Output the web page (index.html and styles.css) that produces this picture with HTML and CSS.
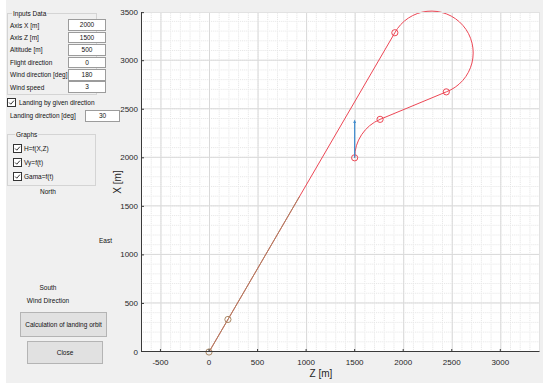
FILE: index.html
```html
<!DOCTYPE html>
<html>
	<head>
		<meta charset="utf-8" />
		<title>Landing orbit</title>
<link rel="stylesheet" href="styles.css">
	</head>
	<body>
		<div class="figure">
			<div class="panel">
				<fieldset class="group inputs">
					<legend>Inputs Data</legend>
					<div class="row"><span class="label">Axis X [m]</span><span class="field">2000</span></div>
					<div class="row"><span class="label">Axis Z [m]</span><span class="field">1500</span></div>
					<div class="row"><span class="label">Altitude [m]</span><span class="field">500</span></div>
					<div class="row"><span class="label">Flight direction</span><span class="field">0</span></div>
					<div class="row"><span class="label">Wind direction [deg]</span><span class="field">180</span></div>
					<div class="row"><span class="label">Wind speed</span><span class="field">3</span></div>
				</fieldset>

				<div class="check given">
					<span class="box"><svg viewBox="0 0 9 9"><path d="M1.5 4.6 L3.6 6.7 L7.6 2.1" /></svg></span>
					<span>Landing by given direction</span>
				</div>
				<div class="row landing">
					<span class="label">Landing direction [deg]</span><span class="field">30</span>
				</div>

				<fieldset class="group graphs">
					<legend>Graphs</legend>
					<div class="check">
						<span class="box"><svg viewBox="0 0 9 9"><path d="M1.5 4.6 L3.6 6.7 L7.6 2.1" /></svg></span>
						<span>H=f(X,Z)</span>
					</div>
					<div class="check">
						<span class="box"><svg viewBox="0 0 9 9"><path d="M1.5 4.6 L3.6 6.7 L7.6 2.1" /></svg></span>
						<span>Vy=f(t)</span>
					</div>
					<div class="check">
						<span class="box"><svg viewBox="0 0 9 9"><path d="M1.5 4.6 L3.6 6.7 L7.6 2.1" /></svg></span>
						<span>Gama=f(t)</span>
					</div>
				</fieldset>

				<div class="compass north">North</div>
				<div class="compass east">East</div>
				<div class="compass south">South</div>
				<div class="compass wind">Wind Direction</div>

				<button class="btn calc">Calculation of landing orbit</button>
				<button class="btn close">Close</button>
			</div>

			<svg class="plot" width="433" height="383" viewBox="0 0 433 383">
				<defs>
					<pattern id="minor" width="100" height="100" patternUnits="userSpaceOnUse">
						<path d="M0 0V100M0 0H100" stroke="#e4e4e4" stroke-width="20.6" stroke-dasharray="10.3 10.3" fill="none" />
					</pattern>
					<pattern id="major" width="500" height="500" patternUnits="userSpaceOnUse">
						<path d="M0 0V500M0 0H500" stroke="#d9d9d9" stroke-width="20.6" fill="none" />
					</pattern>
				</defs>

				<!-- data space: 1 unit = 0.0971 px, origin at (99, 352) -->
				<g transform="translate(99 352) scale(0.0971 -0.0971)">
					<rect x="-700" y="0" width="4100" height="3500" fill="#fff" />
					<rect x="-700" y="0" width="4100" height="3500" fill="url(#minor)" />
					<rect x="-700" y="0" width="4100" height="3500" fill="url(#major)" />

					<path class="red" d="M1500 2000 A430 430 0 0 0 1762 2396 L2444 2679 A430 430 0 1 1 1914 3288 L0 0" />
					<circle class="red" cx="1500" cy="2000" r="32" />
					<circle class="red" cx="1762" cy="2396" r="32" />
					<circle class="red" cx="2444" cy="2679" r="32" />
					<circle class="red" cx="1914" cy="3288" r="32" />

					<path class="brown" d="M0 0 L931 1600" />
					<circle class="brown" cx="0" cy="0" r="32" />
					<circle class="brown" cx="195" cy="335" r="32" />
				</g>

				<path class="arrow" d="M244.65 157.8 V122" />
				<path class="arrow-head" d="M244.65 119.5 L243.2 123 H246.1 Z" />

				<rect class="frame" x="31.5" y="12.5" width="398" height="339" />
				<path class="axis" d="M31.5 12 V352 M31 351.5 H429.5" />
				<path class="axis" d="M31 303.45h3M31 254.9h3M31 206.35h3M31 157.8h3M31 109.25h3M31 60.7h3M31 12.65h3
					M50.45 352v-3M99 352v-3M147.55 352v-3M196.1 352v-3M244.65 352v-3M293.2 352v-3M341.75 352v-3M390.3 352v-3" />

				<g class="ylabels">
					<text x="28" y="352">0</text>
					<text x="28" y="303.45">500</text>
					<text x="28" y="254.9">1000</text>
					<text x="28" y="206.35">1500</text>
					<text x="28" y="157.8">2000</text>
					<text x="28" y="109.25">2500</text>
					<text x="28" y="60.7">3000</text>
					<text x="28" y="12.15">3500</text>
				</g>
				<g class="xlabels">
					<text x="50.45" y="365">-500</text>
					<text x="99" y="365">0</text>
					<text x="147.55" y="365">500</text>
					<text x="196.1" y="365">1000</text>
					<text x="244.65" y="365">1500</text>
					<text x="293.2" y="365">2000</text>
					<text x="341.75" y="365">2500</text>
					<text x="390.3" y="365">3000</text>
				</g>

				<text class="axis-title" x="211" y="377">Z [m]</text>
				<text class="axis-title" transform="translate(11 182) rotate(-90)">X [m]</text>
			</svg>
		</div>
	</body>
</html>
```

FILE: styles.css
```css
body {
	margin: 0;
	background: #fff;
	font-family: "Liberation Sans", Arial, sans-serif;
}
.figure {
	display: flex;
	margin-left: 6px;
	width: 537px;
	height: 383px;
	background: #f0f0f0;
}
.panel {
	width: 104px;
	flex-shrink: 0;
	display: flex;
	flex-direction: column;
	align-items: flex-start;
	font-size: 6.5px;
	line-height: 7px;
	color: #111;
}
.group {
	box-sizing: border-box;
	margin: 10px 0 0 1px;
	border: 1px solid #d4d4d4;
	min-width: 0;
}
.group legend {
	margin-left: 2px;
	padding: 0 1px;
	line-height: 7px;
}
.inputs {
	width: 90px;
	padding: 2px 0 1px 2px;
}
.row {
	display: flex;
	align-items: center;
	height: 12.4px;
}
.label {
	width: 58px;
	flex-shrink: 0;
	white-space: nowrap;
}
.field {
	box-sizing: border-box;
	flex-shrink: 0;
	width: 38px;
	height: 11.6px;
	line-height: 10px;
	border: 1px solid #9c9c9c;
	background: #fff;
	text-align: center;
}
.check {
	display: flex;
	align-items: center;
	gap: 2px;
	height: 9px;
	white-space: nowrap;
}
.box {
	box-sizing: border-box;
	width: 9px;
	height: 9px;
	border: 1px solid #333;
	background: #fff;
}
.box svg {
	display: block;
	width: 7px;
	height: 7px;
}
.box path {
	fill: none;
	stroke: #222;
	stroke-width: 1.2;
}
.given {
	margin: 2.6px 0 0 1px;
	gap: 3px;
}
.landing {
	margin: 3px 0 0 4px;
	height: 12px;
}
.landing .label {
	width: 75px;
}
.landing .field {
	width: 35px;
	height: 12px;
}
.graphs {
	width: 89px;
	padding: 6px 0 4px 5px;
	margin-top: 9px;
	display: flex;
	flex-direction: column;
	gap: 5px;
}
.compass {
	width: 84px;
	text-align: center;
	white-space: nowrap;
}
.north {
	margin-top: 2.5px;
}
.east {
	width: auto;
	margin: 42px 0 0 93px;
}
.south {
	margin-top: 40px;
}
.wind {
	margin-top: 6px;
}
.btn {
	box-sizing: border-box;
	padding: 0;
	font-family: inherit;
	font-size: 6.5px;
	color: #111;
	background: #e1e1e1;
	border: 1px solid #b4b4b4;
	border-radius: 0;
}
.calc {
	width: 87px;
	height: 25px;
	margin: 7.5px 0 0 14px;
}
.close {
	width: 76px;
	height: 23px;
	margin: 4px 0 0 21px;
}
.plot {
	display: block;
	flex-shrink: 0;
}
.plot .red,
.plot .brown {
	fill: none;
	stroke-width: 1;
	vector-effect: non-scaling-stroke;
}
.plot .red {
	stroke: #ec4654;
}
.plot .brown {
	stroke: #a88763;
}
.arrow {
	stroke: #3f8ccf;
	stroke-width: 1.2;
	fill: none;
}
.arrow-head {
	fill: #3f8ccf;
}
.frame {
	fill: none;
	stroke: #e2e2e2;
}
.axis {
	fill: none;
	stroke: #3a3a3a;
	stroke-width: 1;
}
.ylabels text,
.xlabels text {
	font-size: 8px;
	fill: #262626;
}
.ylabels text {
	text-anchor: end;
	dominant-baseline: central;
}
.xlabels text {
	text-anchor: middle;
}
.axis-title {
	font-size: 10px;
	fill: #262626;
	text-anchor: middle;
}
```
